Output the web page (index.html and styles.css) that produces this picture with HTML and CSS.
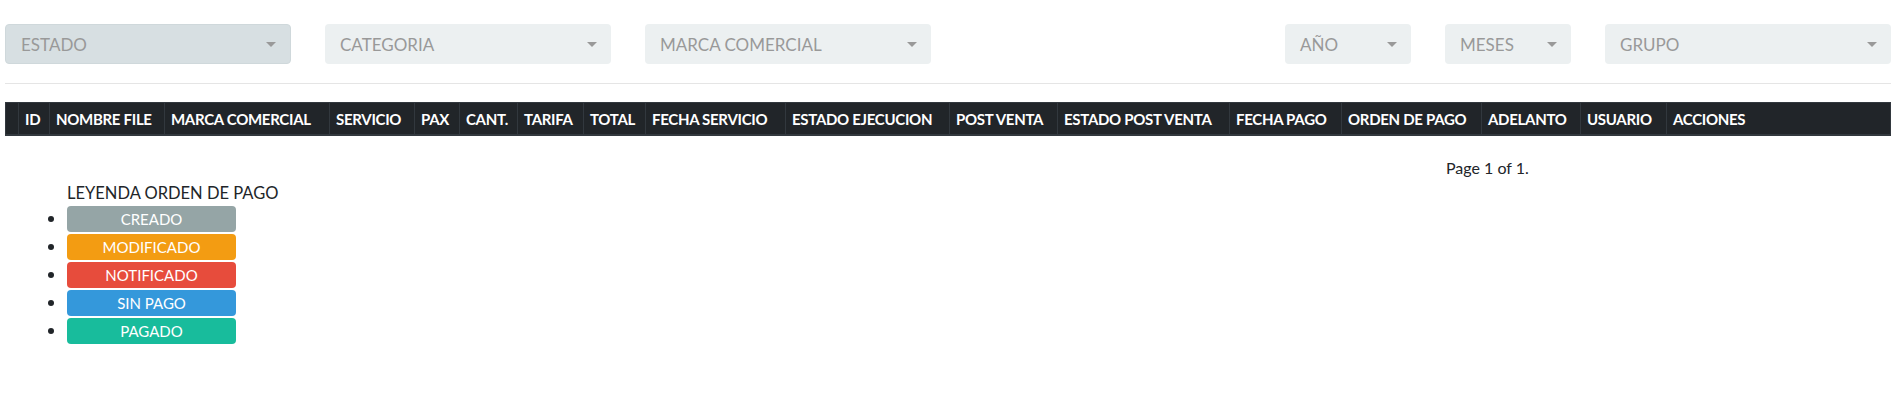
FILE: index.html
```html
<!DOCTYPE html>
<html lang="es">
<head>
  <meta charset="UTF-8">
  <title>Servicios - Orden de pago</title>
  <link rel="stylesheet" href="styles.css">
</head>
<body>
  <div class="page">
    <div class="filters">
      <div class="select active"><span>ESTADO</span><i class="caret"></i></div>
      <div class="select"><span>CATEGORIA</span><i class="caret"></i></div>
      <div class="select"><span>MARCA COMERCIAL</span><i class="caret"></i></div>
      <div class="select small push"><span>AÑO</span><i class="caret"></i></div>
      <div class="select small"><span>MESES</span><i class="caret"></i></div>
      <div class="select"><span>GRUPO</span><i class="caret"></i></div>
    </div>

    <hr class="sep">

    <table class="grid">
      <colgroup>
        <col style="width:13px">
        <col style="width:31px">
        <col style="width:115px">
        <col style="width:165px">
        <col style="width:85px">
        <col style="width:45px">
        <col style="width:58px">
        <col style="width:66px">
        <col style="width:62px">
        <col style="width:140px">
        <col style="width:164px">
        <col style="width:108px">
        <col style="width:172px">
        <col style="width:112px">
        <col style="width:140px">
        <col style="width:99px">
        <col style="width:86px">
        <col>
      </colgroup>
      <thead>
        <tr>
          <th></th>
          <th>ID</th>
          <th>NOMBRE FILE</th>
          <th>MARCA COMERCIAL</th>
          <th>SERVICIO</th>
          <th>PAX</th>
          <th>CANT.</th>
          <th>TARIFA</th>
          <th>TOTAL</th>
          <th>FECHA SERVICIO</th>
          <th>ESTADO EJECUCION</th>
          <th>POST VENTA</th>
          <th>ESTADO POST VENTA</th>
          <th>FECHA PAGO</th>
          <th>ORDEN DE PAGO</th>
          <th>ADELANTO</th>
          <th>USUARIO</th>
          <th>ACCIONES</th>
        </tr>
      </thead>
      <tbody></tbody>
    </table>

    <div class="pager">Page 1 of 1.</div>

    <ul class="legend">
      <li class="legend-title">LEYENDA ORDEN DE PAGO</li>
      <li><span class="tag creado">CREADO</span></li>
      <li><span class="tag modificado">MODIFICADO</span></li>
      <li><span class="tag notificado">NOTIFICADO</span></li>
      <li><span class="tag sinpago">SIN PAGO</span></li>
      <li><span class="tag pagado">PAGADO</span></li>
    </ul>
  </div>
</body>
</html>
```

FILE: styles.css
```css
body {
  margin: 0;
  font-family: Lato, "Open Sans", sans-serif;
  color: #212529;
  background: #fff;
}
.page {
  padding: 24px 13px 0 5px;
}
.filters {
  display: flex;
  gap: 34px;
}
.select {
  box-sizing: border-box;
  width: 286px;
  height: 40px;
  padding: 0 14px 0 15px;
  display: flex;
  align-items: center;
  justify-content: space-between;
  background: #ecf0f1;
  border-radius: 4px;
  color: #999;
  font-size: 17px;
}
.select.active {
  background: #d7dfe2;
  border: 1px solid #cfd8db;
}
.select.small {
  width: 126px;
}
.select.push {
  margin-left: 320px;
}
.caret {
  width: 0;
  height: 0;
  border-top: 5px solid #999;
  border-left: 5px solid transparent;
  border-right: 5px solid transparent;
}
.sep {
  margin: 19px 0 18px;
  border: 0;
  border-top: 1px solid #e5e5e5;
}
.grid {
  width: 1886px;
  border-collapse: collapse;
  table-layout: fixed;
}
.grid th {
  background: #212529;
  color: #fff;
  border: 1px solid #32383e;
  border-bottom-width: 2px;
  padding: 7px 6px 6px;
  font-size: 15px;
  font-weight: bold;
  line-height: 18px;
  letter-spacing: -0.3px;
  text-align: left;
  white-space: nowrap;
  overflow: hidden;
}
.pager {
  margin-top: 20px;
  padding-left: 1441px;
  font-size: 16px;
  line-height: 24px;
}
.legend {
  margin: 1px 0 0 22px;
  padding-left: 40px;
  font-size: 16px;
  line-height: 24px;
}
.legend li {
  margin-bottom: 2px;
}
.legend li::marker {
  font-size: 19px;
}
.legend .legend-title {
  list-style: none;
  margin-bottom: 1px;
  font-size: 16.5px;
}
.tag {
  display: block;
  width: 169px;
  height: 26px;
  line-height: 26px;
  border-radius: 4px;
  text-align: center;
  color: #fff;
  font-size: 15px;
}
.creado { background: #95a5a6; }
.modificado { background: #f39c12; }
.notificado { background: #e74c3c; }
.sinpago { background: #3498db; }
.pagado { background: #18bc9c; }
```
